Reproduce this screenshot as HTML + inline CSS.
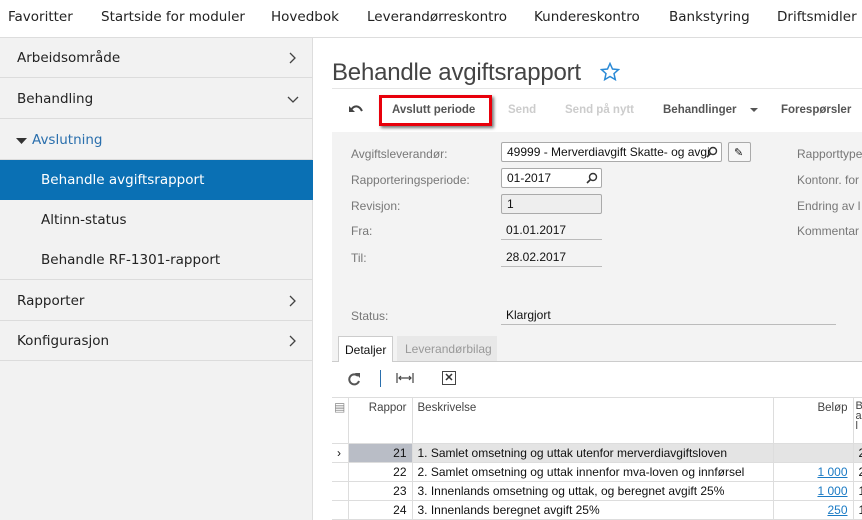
<!DOCTYPE html>
<html style="overflow:hidden;width:862px;height:520px"><head><meta charset="utf-8"><style>
*{margin:0;padding:0;box-sizing:border-box}
body{width:862px;height:520px;overflow:hidden;background:#fff;font-family:"Liberation Sans",sans-serif;position:relative;color:#333}
.a{position:absolute;white-space:nowrap}
.nav{color:#222;top:9px;font-family:"DejaVu Sans","Liberation Sans",sans-serif;font-size:13.5px}
.side{position:absolute;left:0;top:38px;width:313px;height:482px;background:#f2f2f2;border-right:1px solid #ddd}
.si{position:absolute;left:0;width:313px;height:40px;border-bottom:1px solid #dcdcdc;font-family:"DejaVu Sans","Liberation Sans",sans-serif;font-size:13.5px;color:#222;padding:12px 0 0 17px}
.lbl{font-size:12px;color:#777}
.inp{position:absolute;height:20px;border:1px solid #aaa;background:#fff;font-size:12px;color:#111;padding:2px 5px;border-radius:2px;white-space:nowrap}
.ul{position:absolute;border-bottom:1px solid #bbb;font-size:12px;color:#111;padding:3px 5px;height:20px}
td{font-size:12px;color:#111;border-right:1px solid #ddd;border-bottom:1px solid #ddd;padding:0 5px;height:19px}
.tb{font-size:11.5px;font-weight:bold}
</style></head><body>
<div class="a nav" style="left:8px">Favoritter</div>
<div class="a nav" style="left:101px">Startside for moduler</div>
<div class="a nav" style="left:271px">Hovedbok</div>
<div class="a nav" style="left:367px">Leverandørreskontro</div>
<div class="a nav" style="left:534px">Kundereskontro</div>
<div class="a nav" style="left:669px">Bankstyring</div>
<div class="a nav" style="left:777px">Driftsmidler</div>
<div class="a" style="left:0;top:37px;width:862px;height:1px;background:#ddd"></div>

<div class="side">
<div class="si" style="top:0">Arbeidsområde<svg class="a" style="left:289px;top:14px" width="8" height="12"><path d="M1 1l5 5-5 5" fill="none" stroke="#444" stroke-width="1.3"/></svg></div>
<div class="si" style="top:41px">Behandling<svg class="a" style="left:287px;top:17px" width="12" height="8"><path d="M1 1l5 5 5-5" fill="none" stroke="#444" stroke-width="1.3"/></svg></div>
<div class="si" style="top:82px;color:#2a6fad;padding-left:32px"><svg class="a" style="left:16px;top:18px" width="11" height="7"><path d="M0 0h11L5.5 6z" fill="#333"/></svg>Avslutning</div>
<div class="si" style="top:122px;background:#0a70b4;color:#fff;padding-left:41px;border-bottom:none">Behandle avgiftsrapport</div>
<div class="si" style="top:162px;padding-left:41px;border-bottom:none">Altinn-status</div>
<div class="si" style="top:202px;padding-left:41px">Behandle RF-1301-rapport</div>
<div class="si" style="top:243px">Rapporter<svg class="a" style="left:289px;top:14px" width="8" height="12"><path d="M1 1l5 5-5 5" fill="none" stroke="#444" stroke-width="1.3"/></svg></div>
<div class="si" style="top:283px">Konfigurasjon<svg class="a" style="left:289px;top:14px" width="8" height="12"><path d="M1 1l5 5-5 5" fill="none" stroke="#444" stroke-width="1.3"/></svg></div>
</div>

<div class="a" style="left:332px;top:59px;font-size:24px;color:#444;font-family:'Liberation Sans',sans-serif;letter-spacing:-0.2px">Behandle avgiftsrapport</div>
<svg class="a" style="left:600px;top:62px" width="20" height="19"><path d="M10 1.5l2.5 5.5 6 .6-4.5 4 1.3 6-5.3-3.1-5.3 3.1 1.3-6-4.5-4 6-.6z" fill="none" stroke="#2a8ad6" stroke-width="1.5"/></svg>
<div class="a" style="left:332px;top:88px;width:530px;height:1px;background:#e5e5e5"></div>
<svg class="a" style="left:348px;top:103px" width="16" height="12"><path d="M3 7C6 2 11 2 14 8" fill="none" stroke="#444" stroke-width="2"/><path d="M1 3v6h6z" fill="#444"/></svg>
<div class="a" style="left:379px;top:95px;width:113px;height:31px;border:3px solid #e8000b;box-shadow:2px 2px 3px #777"></div>
<div class="a tb" style="left:392px;top:104px;color:#555">Avslutt periode</div>
<div class="a tb" style="left:508px;top:104px;color:#ccc">Send</div>
<div class="a tb" style="left:565px;top:104px;color:#ccc">Send på nytt</div>
<div class="a tb" style="left:663px;top:104px;color:#555">Behandlinger</div>
<svg class="a" style="left:750px;top:108px" width="8" height="5"><path d="M0 0h8L4 4z" fill="#555"/></svg>
<div class="a tb" style="left:781px;top:104px;color:#555">Forespørsler</div>

<div class="a" style="left:332px;top:132px;width:530px;height:230px;background:#f3f3f3"></div>
<div class="a lbl" style="left:351px;top:147px">Avgiftsleverandør:</div>
<div class="a lbl" style="left:351px;top:173px">Rapporteringsperiode:</div>
<div class="a lbl" style="left:351px;top:199px">Revisjon:</div>
<div class="a lbl" style="left:351px;top:224px">Fra:</div>
<div class="a lbl" style="left:351px;top:251px">Til:</div>
<div class="a lbl" style="left:351px;top:309px">Status:</div>
<div class="inp" style="left:501px;top:142px;width:221px;overflow:hidden;padding-right:20px">49999 - Merverdiavgift Skatte- og avgi</div>
<svg class="a" style="left:706px;top:146px" width="12" height="12"><circle cx="7" cy="5" r="3.5" fill="none" stroke="#333" stroke-width="1.4"/><path d="M4.5 7.5L1 11" stroke="#333" stroke-width="1.6"/></svg>
<div class="inp" style="left:728px;top:142px;width:23px;background:#f6f6f6"><span style="font-size:11px">✎</span></div>
<div class="inp" style="left:501px;top:168px;width:101px">01-2017</div>
<svg class="a" style="left:586px;top:172px" width="12" height="12"><circle cx="7" cy="5" r="3.5" fill="none" stroke="#333" stroke-width="1.4"/><path d="M4.5 7.5L1 11" stroke="#333" stroke-width="1.6"/></svg>
<div class="inp" style="left:501px;top:194px;width:101px;background:#eee">1</div>
<div class="ul" style="left:501px;top:220px;width:101px">01.01.2017</div>
<div class="ul" style="left:501px;top:247px;width:101px">28.02.2017</div>
<div class="ul" style="left:501px;top:305px;width:335px">Klargjort</div>
<div class="a lbl" style="left:797px;top:147px">Rapporttype</div>
<div class="a lbl" style="left:797px;top:173px">Kontonr. for</div>
<div class="a lbl" style="left:797px;top:199px">Endring av l</div>
<div class="a lbl" style="left:797px;top:224px">Kommentar</div>

<div class="a" style="left:332px;top:361px;width:530px;height:1px;background:#ccc"></div>
<div class="a" style="left:338px;top:336px;width:55px;height:26px;background:#fff;border:1px solid #ccc;border-bottom:none;font-size:12px;color:#111;padding:6px 0 0 6px">Detaljer</div>
<div class="a" style="left:397px;top:336px;width:100px;height:25px;background:#e8e8e8;font-size:12px;color:#999;padding:6px 0 0 8px">Leverandørbilag</div>
<svg class="a" style="left:347px;top:372px" width="14" height="14"><path d="M11 4A5 5 0 1 0 12 9" fill="none" stroke="#555" stroke-width="2"/><path d="M8 1h5v5z" fill="#555"/></svg>
<div class="a" style="left:380px;top:370px;width:1px;height:17px;background:#2a6fad"></div>
<svg class="a" style="left:396px;top:372px" width="18" height="12"><path d="M1 1v10M17 1v10M3 6h12M5 4l-2 2 2 2M13 4l2 2-2 2" fill="none" stroke="#444" stroke-width="1.2"/></svg>
<div class="a" style="left:442px;top:371px;width:14px;height:14px;border:1px solid #444;font-size:11px;font-weight:bold;text-align:center;line-height:12px">✕</div>

<table class="a" style="left:332px;top:397px;border-collapse:collapse;border-top:1px solid #ddd;width:540px">
<tr style="height:46px"><td style="width:16px;vertical-align:top;color:#888;padding:2px">▤</td><td style="width:64px;text-align:right;vertical-align:top;padding-top:4px;color:#444;font-size:11.5px">Rappor</td><td style="width:361px;vertical-align:top;padding-top:4px;color:#444;font-size:11.5px">Beskrivelse</td><td style="width:80px;text-align:right;vertical-align:top;padding-top:4px;color:#444;font-size:11.5px">Beløp</td><td style="vertical-align:top;font-size:11px;color:#444;line-height:10px;padding:3px 2px">B<br>a<br>l</td></tr>
<tr style="background:#e4e4e4"><td style="background:#fff">›</td><td style="text-align:right;background:#b9bdc6">21</td><td>1. Samlet omsetning og uttak utenfor merverdiavgiftsloven</td><td></td><td>2</td></tr>
<tr><td></td><td style="text-align:right">22</td><td>2. Samlet omsetning og uttak innenfor mva-loven og innførsel</td><td style="text-align:right;color:#1a7ac4;text-decoration:underline">1 000</td><td>2</td></tr>
<tr><td></td><td style="text-align:right">23</td><td>3. Innenlands omsetning og uttak, og beregnet avgift 25%</td><td style="text-align:right;color:#1a7ac4;text-decoration:underline">1 000</td><td>1</td></tr>
<tr><td></td><td style="text-align:right">24</td><td>3. Innenlands beregnet avgift 25%</td><td style="text-align:right;color:#1a7ac4;text-decoration:underline">250</td><td>1</td></tr>
</table>
</body></html>
